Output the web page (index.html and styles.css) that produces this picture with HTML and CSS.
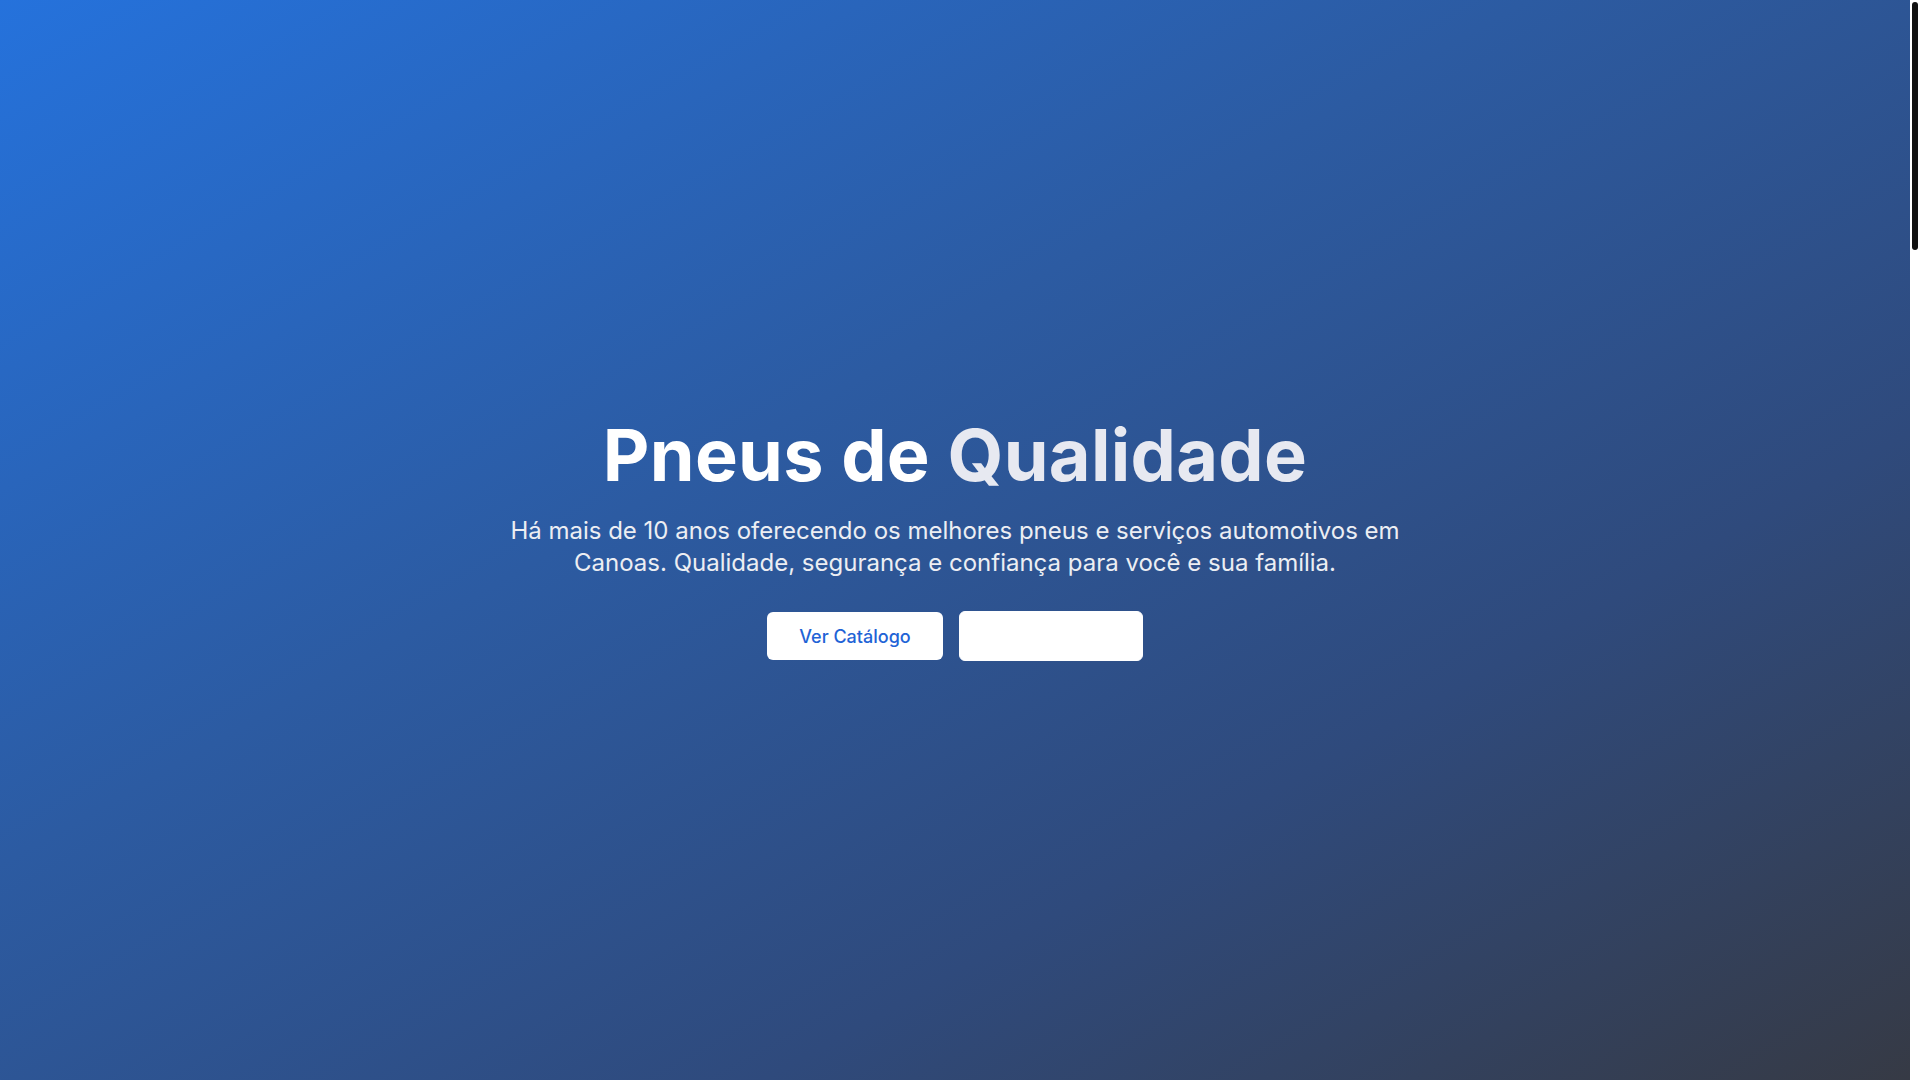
FILE: index.html
```html
<!DOCTYPE html>
<html lang="pt-BR">
<head>
  <meta charset="UTF-8">
  <meta name="viewport" content="width=device-width, initial-scale=1.0">
  <title>Pneus de Qualidade - Canoas</title>
  <link rel="stylesheet" href="styles.css">
</head>
<body>
  <section class="hero">
    <div class="hero-content">
      <h1>Pneus de <span class="highlight">Qualidade</span></h1>
      <p>Há mais de 10 anos oferecendo os melhores pneus e serviços automotivos em Canoas. Qualidade, segurança e confiança para você e sua família.</p>
      <div class="actions">
        <a href="#catalogo" class="button button-primary">Ver Catálogo</a>
        <a href="#contato" class="button button-outline">Fale Conosco</a>
      </div>
    </div>
  </section>

  <section id="servicos" class="section">
    <h2>Nossos Serviços</h2>
  </section>

  <section id="catalogo" class="section section-alt">
    <h2>Catálogo</h2>
  </section>

  <section id="sobre" class="section">
    <h2>Sobre Nós</h2>
  </section>

  <section id="contato" class="section section-alt">
    <h2>Contato</h2>
  </section>

  <footer class="footer">
    <p>&copy; Pneus de Qualidade - Canoas/RS</p>
  </footer>

  <div class="scroll-rail" aria-hidden="true">
    <div class="scroll-thumb"></div>
  </div>
</body>
</html>
```

FILE: styles.css
```css
body {
  margin: 0;
  padding-right: 10px;
  font-family: Inter, "Noto Sans", Arial, sans-serif;
  color: #111827;
  background: #fff;
}

.scroll-rail {
  position: fixed;
  top: 0;
  right: 0;
  bottom: 0;
  width: 10px;
  background: #fff;
  z-index: 10;
}

.scroll-thumb {
  position: absolute;
  top: 2px;
  left: 2px;
  width: 6px;
  height: 248px;
  border-radius: 3px;
  background: #111;
}

.hero {
  min-height: 100vh;
  display: flex;
  align-items: center;
  justify-content: center;
  background: linear-gradient(to bottom right, #2572dc 0%, #2c5ba2 40%, #2f4a7c 70%, #363a45 100%);
  color: #fff;
  text-align: center;
}

.hero-content {
  max-width: 56rem;
  padding: 0 1rem;
}

h1 {
  margin: 0 0 24px;
  font-size: 72px;
  line-height: 1;
  font-weight: 700;
  letter-spacing: 0.3px;
}

.highlight {
  color: #e7e9f1;
}

.hero p {
  margin: 0 0 32px;
  font-size: 24px;
  line-height: 32px;
  color: #eceef3;
}

.actions {
  display: flex;
  justify-content: center;
  align-items: center;
  gap: 16px;
}

.button {
  display: inline-flex;
  align-items: center;
  justify-content: center;
  height: 48px;
  padding: 0 32px;
  font-size: 18px;
  font-weight: 500;
  border-radius: 6px;
  text-decoration: none;
  box-sizing: border-box;
}

.button-primary {
  background: #fff;
  color: #1f63d6;
}

.button-outline {
  height: 50px;
  background: #fff;
  color: #fff;
  border: 1px solid #fff;
  min-width: 184px;
}

.section {
  min-height: 760px;
  padding: 80px 1rem;
  text-align: center;
}

.section-alt {
  background: #f9fafb;
}

.section h2 {
  margin: 0;
  font-size: 36px;
}

.footer {
  padding: 40px 1rem;
  background: #1f2937;
  color: #9ca3af;
  text-align: center;
}
```
